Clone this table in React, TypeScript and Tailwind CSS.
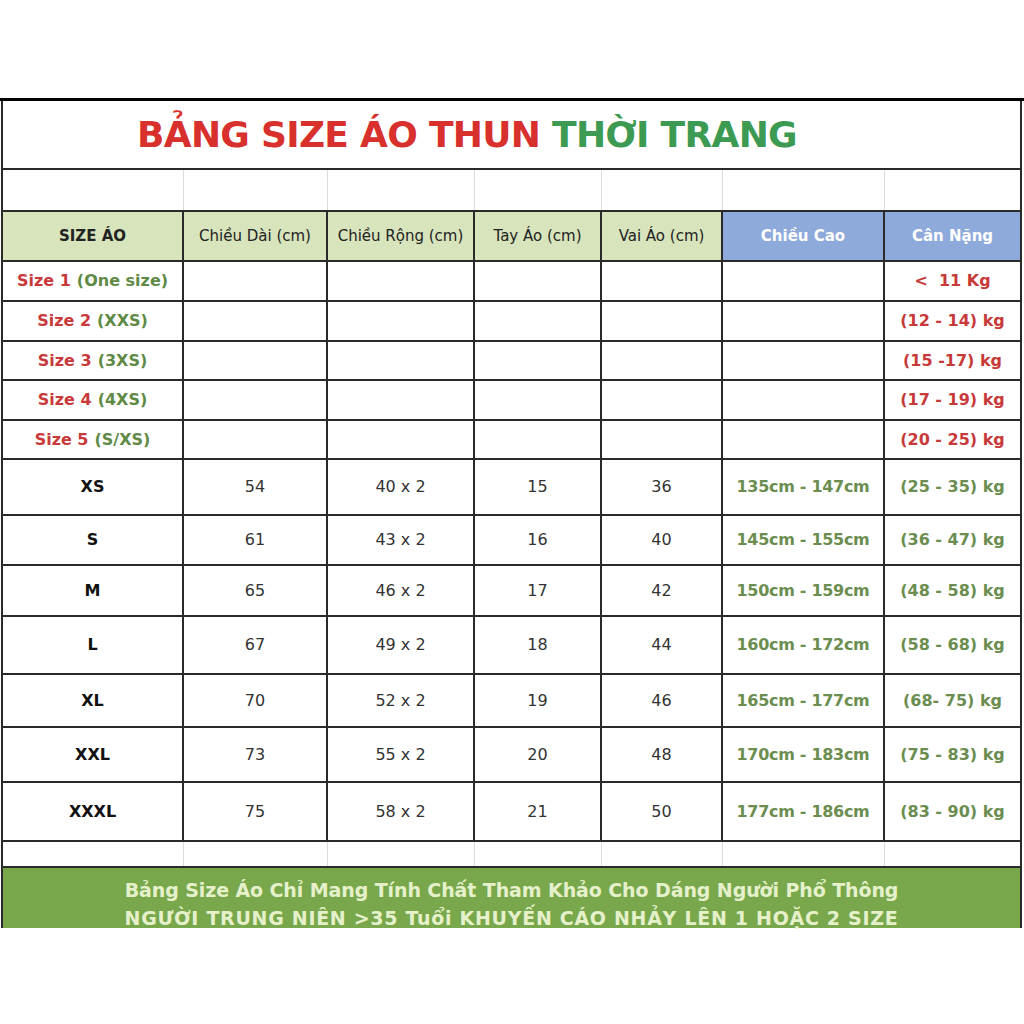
const COLS = "grid grid-cols-[181px_144px_147px_127px_121px_162px_137px]";
const LINE = "border-[#2a2a2a]";

type SmallRow = { num: string; tag: string; weight: string; h: string };
type BigRow = {
  size: string;
  len: string;
  width: string;
  sleeve: string;
  shoulder: string;
  height: string;
  weight: string;
  h: string;
};

const smallRows: SmallRow[] = [
  { num: "Size 1", tag: "(One size)", weight: "<  11 Kg", h: "h-[40px]" },
  { num: "Size 2", tag: "(XXS)", weight: "(12 - 14) kg", h: "h-[40px]" },
  { num: "Size 3", tag: "(3XS)", weight: "(15 -17) kg", h: "h-[39px]" },
  { num: "Size 4", tag: "(4XS)", weight: "(17 - 19) kg", h: "h-[40px]" },
  { num: "Size 5", tag: "(S/XS)", weight: "(20 - 25) kg", h: "h-[39px]" },
];

const bigRows: BigRow[] = [
  { size: "XS", len: "54", width: "40 x 2", sleeve: "15", shoulder: "36", height: "135cm - 147cm", weight: "(25 - 35) kg", h: "h-[56px]" },
  { size: "S", len: "61", width: "43 x 2", sleeve: "16", shoulder: "40", height: "145cm - 155cm", weight: "(36 - 47) kg", h: "h-[50px]" },
  { size: "M", len: "65", width: "46 x 2", sleeve: "17", shoulder: "42", height: "150cm - 159cm", weight: "(48 - 58) kg", h: "h-[51px]" },
  { size: "L", len: "67", width: "49 x 2", sleeve: "18", shoulder: "44", height: "160cm - 172cm", weight: "(58 - 68) kg", h: "h-[58px]" },
  { size: "XL", len: "70", width: "52 x 2", sleeve: "19", shoulder: "46", height: "165cm - 177cm", weight: "(68- 75) kg", h: "h-[53px]" },
  { size: "XXL", len: "73", width: "55 x 2", sleeve: "20", shoulder: "48", height: "170cm - 183cm", weight: "(75 - 83) kg", h: "h-[55px]" },
  { size: "XXXL", len: "75", width: "58 x 2", sleeve: "21", shoulder: "50", height: "177cm - 186cm", weight: "(83 - 90) kg", h: "h-[59px]" },
];

function Cell({ children, className = "" }: { children?: React.ReactNode; className?: string }) {
  return (
    <div className={`flex items-center justify-center border-r-2 border-b-2 ${LINE} ${className}`}>
      {children}
    </div>
  );
}

function BlankRow({ h }: { h: string }) {
  return (
    <div className={`${COLS} ${h}`}>
      {[0, 1, 2, 3, 4, 5].map((i) => (
        <div key={i} className="border-r border-[#dcdcdc]" />
      ))}
      <div />
    </div>
  );
}

export default function App() {
  return (
    <div className="h-[1024px] w-[1024px] overflow-hidden bg-white pt-[98px] font-['DejaVu_Sans',sans-serif]">
      <div className="h-[3px] w-full bg-black" />

      <div className={`ml-[1px] w-[1021px] border-x-2 ${LINE}`}>
        {/* Titel */}
        <div className={`flex h-[69px] items-center border-b-2 pl-[134px] ${LINE}`}>
          <h1 className="text-[36px] font-bold tracking-[-0.7px] text-[#d8302c]">
            BẢNG SIZE ÁO THUN <span className="text-[#3d9a52]">THỜI TRANG</span>
          </h1>
        </div>

        <BlankRow h="h-[40px]" />

        {/* Kopfzeile */}
        <div className={`${COLS} h-[52px] border-t-2 ${LINE} text-[15px] text-[#222]`}>
          <Cell className="bg-[#d8e4bc] font-bold">SIZE ÁO</Cell>
          <Cell className="bg-[#d8e4bc]">Chiều Dài (cm)</Cell>
          <Cell className="bg-[#d8e4bc]">Chiều Rộng (cm)</Cell>
          <Cell className="bg-[#d8e4bc]">Tay Áo (cm)</Cell>
          <Cell className="bg-[#d8e4bc]">Vai Áo (cm)</Cell>
          <Cell className="bg-[#8eaadb] font-bold text-white">Chiều Cao</Cell>
          <Cell className="border-r-0 bg-[#8eaadb] font-bold text-white">Cân Nặng</Cell>
        </div>

        {smallRows.map((r) => (
          <div key={r.num} className={`${COLS} ${r.h} text-[16px] font-bold`}>
            <Cell>
              <span className="text-[#c83a3a]">{r.num}</span>
              <span className="ml-[6px] text-[#5f8a45]">{r.tag}</span>
            </Cell>
            <Cell />
            <Cell />
            <Cell />
            <Cell />
            <Cell />
            <Cell className="border-r-0 whitespace-pre text-[#c83a3a]">{r.weight}</Cell>
          </div>
        ))}

        {bigRows.map((r) => (
          <div key={r.size} className={`${COLS} ${r.h} text-[16px] text-[#333]`}>
            <Cell className="font-bold text-[#111]">{r.size}</Cell>
            <Cell>{r.len}</Cell>
            <Cell>{r.width}</Cell>
            <Cell>{r.sleeve}</Cell>
            <Cell>{r.shoulder}</Cell>
            <Cell className="font-bold tracking-[-0.3px] text-[#6b8e50]">{r.height}</Cell>
            <Cell className="border-r-0 font-bold text-[#6b8e50]">{r.weight}</Cell>
          </div>
        ))}

        <BlankRow h="h-[24px]" />
      </div>

      {/* Hinweis */}
      <div className={`ml-[1px] flex h-[62px] w-[1021px] flex-col items-center border-x-2 border-t-2 ${LINE} bg-[#78a84b] pt-[8px] text-[19px] font-bold leading-[28px] text-[#e6f1cc]`}>
        <p className="tracking-[-0.1px]">Bảng Size Áo Chỉ Mang Tính Chất Tham Khảo Cho Dáng Người Phổ Thông</p>
        <p className="tracking-[0.7px]">NGƯỜI TRUNG NIÊN &gt;35 Tuổi KHUYẾN CÁO NHẢY LÊN 1 HOẶC 2 SIZE</p>
      </div>
    </div>
  );
}
